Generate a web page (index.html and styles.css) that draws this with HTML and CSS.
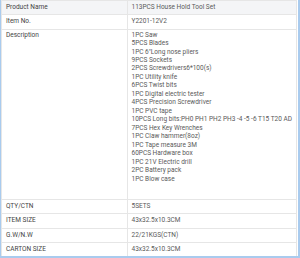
FILE: index.html
```html
<!DOCTYPE html>
<html lang="en">
<head>
  <meta charset="UTF-8">
  <title>113PCS House Hold Tool Set</title>
  <link rel="stylesheet" href="styles.css">
</head>
<body>
  <div class="spec-box">
    <table class="spec-table">
      <tr class="head-row">
        <td class="label">Product Name</td>
        <td class="value">113PCS House Hold Tool Set</td>
      </tr>
      <tr>
        <td class="label">Item No.</td>
        <td class="value">Y2201-12V2</td>
      </tr>
      <tr class="desc-row">
        <td class="label">Description</td>
        <td class="value">
          1PC Saw<br>
          5PCS Blades<br>
          1PC 6"Long nose pliers<br>
          9PCS Sockets<br>
          2PCS Screwdrivers6*100(s)<br>
          1PC Utility knife<br>
          6PCS Twist bits<br>
          1PC Digital electric tester<br>
          4PCS Precision Screwdriver<br>
          1PC PVC tape<br>
          10PCS Long bits:PH0 PH1 PH2 PH3 -4 -5 -6 T15 T20 AD<br>
          7PCS Hex Key Wrenches<br>
          1PC Claw hammer(8oz)<br>
          1PC Tape measure 3M<br>
          60PCS Hardware box<br>
          1PC 21V Electric drill<br>
          2PC Battery pack<br>
          1PC Blow case
        </td>
      </tr>
      <tr>
        <td class="label">QTY/CTN</td>
        <td class="value">5SETS</td>
      </tr>
      <tr>
        <td class="label">ITEM SIZE</td>
        <td class="value">43x32.5x10.3CM</td>
      </tr>
      <tr>
        <td class="label">G.W/N.W</td>
        <td class="value">22/21KGS(CTN)</td>
      </tr>
      <tr>
        <td class="label">CARTON SIZE</td>
        <td class="value">43x32.5x10.3CM</td>
      </tr>
    </table>
  </div>
</body>
</html>
```

FILE: styles.css
```css
* {
  box-sizing: border-box;
  margin: 0;
  padding: 0;
}

body {
  background: #fff;
  font-family: Roboto, "Liberation Sans", Arial, sans-serif;
}

.spec-box {
  width: 300px;
  height: 258px;
  overflow: hidden;
  border-style: solid;
  border-color: #a9cbee;
  border-width: 0 2px 2px 1px;
  padding: 0 1px 1px 0;
}

.spec-table {
  width: 100%;
  border-collapse: collapse;
  font-size: 6.5px;
  line-height: 9.3px;
}

.spec-table td {
  border: 1px solid #e6e6e6;
  padding: 2px 4px;
  vertical-align: top;
  white-space: nowrap;
}

.spec-table .label {
  width: 147px;
  color: #444;
}

.spec-table .value {
  color: #5a5a5a;
}

.head-row td {
  background: #f4f5f7;
}

.desc-row td {
  line-height: 8.47px;
  padding-top: 1px;
  padding-bottom: 16px;
}
```
